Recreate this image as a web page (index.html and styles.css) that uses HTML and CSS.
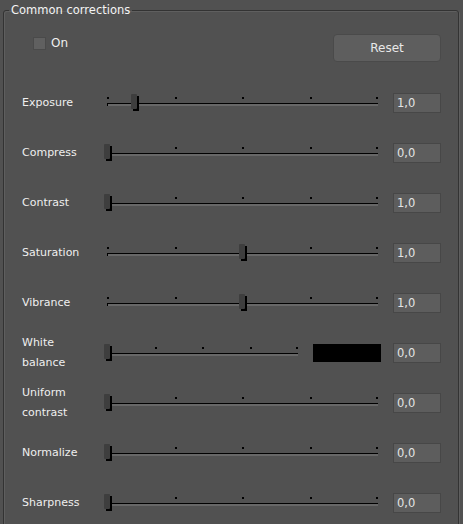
FILE: index.html
```html
<!DOCTYPE html>
<html>
<head>
<meta charset="utf-8">
<link rel="stylesheet" href="styles.css">
</head>
<body>
<fieldset class="group">
  <legend class="group-title">Common corrections</legend>
  <div class="top">
    <label class="check"><span class="check-box"></span><span>On</span></label>
    <button class="btn">Reset</button>
  </div>
  <div class="rows">
    <div class="row">
      <div class="label">Exposure</div>
      <div class="ctrl">
        <svg class="slider" width="285" height="20" viewBox="0 0 285 20">
          <g class="ticks"><rect x="7" y="4" width="2" height="2"/><rect x="75" y="4" width="2" height="2"/><rect x="142" y="4" width="2" height="2"/><rect x="210" y="4" width="2" height="2"/><rect x="276" y="4" width="2" height="2"/></g>
          <rect x="7" y="10" width="271" height="1" fill="#000"/><rect x="7" y="10" width="1" height="3" fill="#000"/><rect x="8" y="11" width="270" height="2" fill="#676767"/>
          <rect x="33" y="3" width="6" height="15" fill="#000"/><rect x="31" y="1" width="6" height="15" rx="1" fill="#3e3e3e"/>
        </svg>
      </div>
      <div class="value">1,0</div>
    </div>
    <div class="row">
      <div class="label">Compress</div>
      <div class="ctrl">
        <svg class="slider" width="285" height="20" viewBox="0 0 285 20">
          <g class="ticks"><rect x="75" y="4" width="2" height="2"/><rect x="142" y="4" width="2" height="2"/><rect x="210" y="4" width="2" height="2"/><rect x="276" y="4" width="2" height="2"/></g>
          <rect x="7" y="10" width="271" height="1" fill="#000"/><rect x="7" y="10" width="1" height="3" fill="#000"/><rect x="8" y="11" width="270" height="2" fill="#676767"/>
          <rect x="6" y="3" width="6" height="15" fill="#000"/><rect x="4" y="1" width="6" height="15" rx="1" fill="#3e3e3e"/>
        </svg>
      </div>
      <div class="value">0,0</div>
    </div>
    <div class="row">
      <div class="label">Contrast</div>
      <div class="ctrl">
        <svg class="slider" width="285" height="20" viewBox="0 0 285 20">
          <g class="ticks"><rect x="75" y="4" width="2" height="2"/><rect x="142" y="4" width="2" height="2"/><rect x="210" y="4" width="2" height="2"/><rect x="276" y="4" width="2" height="2"/></g>
          <rect x="7" y="10" width="271" height="1" fill="#000"/><rect x="7" y="10" width="1" height="3" fill="#000"/><rect x="8" y="11" width="270" height="2" fill="#676767"/>
          <rect x="6" y="3" width="6" height="15" fill="#000"/><rect x="4" y="1" width="6" height="15" rx="1" fill="#3e3e3e"/>
        </svg>
      </div>
      <div class="value">1,0</div>
    </div>
    <div class="row">
      <div class="label">Saturation</div>
      <div class="ctrl">
        <svg class="slider" width="285" height="20" viewBox="0 0 285 20">
          <g class="ticks"><rect x="7" y="4" width="2" height="2"/><rect x="75" y="4" width="2" height="2"/><rect x="210" y="4" width="2" height="2"/><rect x="276" y="4" width="2" height="2"/></g>
          <rect x="7" y="10" width="271" height="1" fill="#000"/><rect x="7" y="10" width="1" height="3" fill="#000"/><rect x="8" y="11" width="270" height="2" fill="#676767"/>
          <rect x="141" y="3" width="6" height="15" fill="#000"/><rect x="139" y="1" width="6" height="15" rx="1" fill="#3e3e3e"/>
        </svg>
      </div>
      <div class="value">1,0</div>
    </div>
    <div class="row">
      <div class="label">Vibrance</div>
      <div class="ctrl">
        <svg class="slider" width="285" height="20" viewBox="0 0 285 20">
          <g class="ticks"><rect x="7" y="4" width="2" height="2"/><rect x="75" y="4" width="2" height="2"/><rect x="210" y="4" width="2" height="2"/><rect x="276" y="4" width="2" height="2"/></g>
          <rect x="7" y="10" width="271" height="1" fill="#000"/><rect x="7" y="10" width="1" height="3" fill="#000"/><rect x="8" y="11" width="270" height="2" fill="#676767"/>
          <rect x="141" y="3" width="6" height="15" fill="#000"/><rect x="139" y="1" width="6" height="15" rx="1" fill="#3e3e3e"/>
        </svg>
      </div>
      <div class="value">1,0</div>
    </div>
    <div class="row">
      <div class="label">White<br>balance</div>
      <div class="ctrl">
        <svg class="slider" width="205" height="20" viewBox="0 0 205 20">
          <g class="ticks"><rect x="55" y="4" width="2" height="2"/><rect x="102" y="4" width="2" height="2"/><rect x="150" y="4" width="2" height="2"/><rect x="196" y="4" width="2" height="2"/></g>
          <rect x="7" y="10" width="191" height="1" fill="#000"/><rect x="7" y="10" width="1" height="3" fill="#000"/><rect x="8" y="11" width="190" height="2" fill="#676767"/>
          <rect x="6" y="3" width="6" height="15" fill="#000"/><rect x="4" y="1" width="6" height="15" rx="1" fill="#3e3e3e"/>
        </svg>
        <div class="swatch"></div>
      </div>
      <div class="value">0,0</div>
    </div>
    <div class="row">
      <div class="label">Uniform<br>contrast</div>
      <div class="ctrl">
        <svg class="slider" width="285" height="20" viewBox="0 0 285 20">
          <g class="ticks"><rect x="75" y="4" width="2" height="2"/><rect x="142" y="4" width="2" height="2"/><rect x="210" y="4" width="2" height="2"/><rect x="276" y="4" width="2" height="2"/></g>
          <rect x="7" y="10" width="271" height="1" fill="#000"/><rect x="7" y="10" width="1" height="3" fill="#000"/><rect x="8" y="11" width="270" height="2" fill="#676767"/>
          <rect x="6" y="3" width="6" height="15" fill="#000"/><rect x="4" y="1" width="6" height="15" rx="1" fill="#3e3e3e"/>
        </svg>
      </div>
      <div class="value">0,0</div>
    </div>
    <div class="row">
      <div class="label">Normalize</div>
      <div class="ctrl">
        <svg class="slider" width="285" height="20" viewBox="0 0 285 20">
          <g class="ticks"><rect x="75" y="4" width="2" height="2"/><rect x="142" y="4" width="2" height="2"/><rect x="210" y="4" width="2" height="2"/><rect x="276" y="4" width="2" height="2"/></g>
          <rect x="7" y="10" width="271" height="1" fill="#000"/><rect x="7" y="10" width="1" height="3" fill="#000"/><rect x="8" y="11" width="270" height="2" fill="#676767"/>
          <rect x="6" y="3" width="6" height="15" fill="#000"/><rect x="4" y="1" width="6" height="15" rx="1" fill="#3e3e3e"/>
        </svg>
      </div>
      <div class="value">0,0</div>
    </div>
    <div class="row">
      <div class="label">Sharpness</div>
      <div class="ctrl">
        <svg class="slider" width="285" height="20" viewBox="0 0 285 20">
          <g class="ticks"><rect x="75" y="4" width="2" height="2"/><rect x="142" y="4" width="2" height="2"/><rect x="210" y="4" width="2" height="2"/><rect x="276" y="4" width="2" height="2"/></g>
          <rect x="7" y="10" width="271" height="1" fill="#000"/><rect x="7" y="10" width="1" height="3" fill="#000"/><rect x="8" y="11" width="270" height="2" fill="#676767"/>
          <rect x="6" y="3" width="6" height="15" fill="#000"/><rect x="4" y="1" width="6" height="15" rx="1" fill="#3e3e3e"/>
        </svg>
      </div>
      <div class="value">0,0</div>
    </div>
  </div>
</fieldset>
</body>
</html>
```
FILE: styles.css
```css
html, body {
  margin: 0;
  padding: 0;
  background: #515151;
  height: 100%;
  overflow: hidden;
}
body {
  font-family: "DejaVu Sans", sans-serif;
  font-size: 11px;
  color: #efefef;
}
.group {
  margin: 3px 4px 0 3px;
  padding: 0 0 30px;
  border: 1px solid #333333;
  border-radius: 3px;
  box-shadow: inset 1px 1px 0 #5f5f5f, 1px 1px 0 #5f5f5f;
  min-width: 0;
}
.group-title {
  margin-left: 5px;
  padding: 0 2px;
  font-size: 11.5px;
  line-height: 14px;
  color: #f4f4f4;
}
.top {
  display: flex;
  justify-content: space-between;
  align-items: flex-start;
  padding: 17px 17px 0 29px;
}
.check {
  display: flex;
  align-items: center;
  gap: 5px;
  margin-top: 2px;
  font-size: 12px;
  line-height: 14px;
}
.check-box {
  width: 11px;
  height: 11px;
  background: #606060;
  border: 1px solid #4a4a4a;
}
.btn {
  width: 108px;
  height: 28px;
  background: #5e5e5e;
  border: 1px solid #4a4a4a;
  border-radius: 4px;
  color: #e8e8e8;
  font-family: "DejaVu Sans", sans-serif;
  font-size: 12px;
  padding: 0;
}
.rows {
  display: flex;
  flex-direction: column;
  margin-top: 16px;
}
.row {
  display: grid;
  grid-template-columns: 78px 285px 48px;
  align-items: center;
  height: 50px;
  padding-left: 18px;
}
.label {
  line-height: 20px;
}
.ctrl {
  display: flex;
  align-items: center;
  gap: 8px;
  height: 20px;
}
.slider {
  display: block;
}
.ticks rect {
  fill: #000;
}
.swatch {
  width: 68px;
  height: 18px;
  background: #000;
}
.value {
  margin-left: 8px;
  background: #5d5d5d;
  border: 1px solid #474747;
  line-height: 18px;
  padding-left: 3px;
  box-sizing: border-box;
  width: 48px;
  height: 20px;
  color: #e4e4e4;
  font-size: 11.5px;
}
```
